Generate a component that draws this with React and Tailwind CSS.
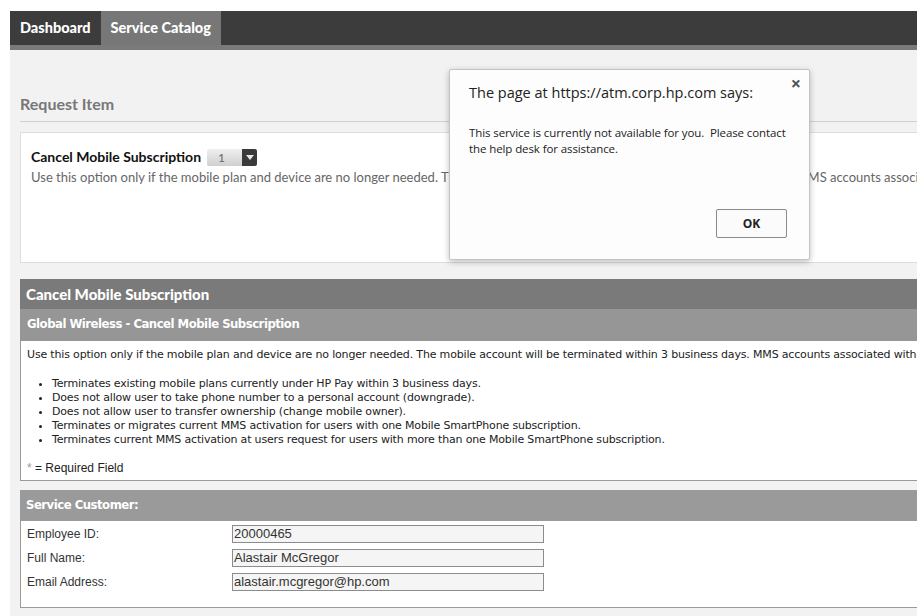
import React from "react";

const bullets = [
  "Terminates existing mobile plans currently under HP Pay within 3 business days.",
  "Does not allow user to take phone number to a personal account (downgrade).",
  "Does not allow user to transfer ownership (change mobile owner).",
  "Terminates or migrates current MMS activation for users with one Mobile SmartPhone subscription.",
  "Terminates current MMS activation at users request for users with more than one Mobile SmartPhone subscription.",
];

const customer = [
  { label: "Employee ID:", value: "20000465" },
  { label: "Full Name:", value: "Alastair McGregor" },
  { label: "Email Address:", value: "alastair.mcgregor@hp.com" },
];

const hp = { fontFamily: "Lato, 'Open Sans', sans-serif" };
const arial = { fontFamily: "'Liberation Sans', Arial, sans-serif" };
const tahoma = { fontFamily: "'DejaVu Sans', Tahoma, sans-serif", fontSize: "11px", letterSpacing: "-0.17px" };
const tahomaBold = { fontFamily: "'DejaVu Sans', Tahoma, sans-serif", fontSize: "11.7px", letterSpacing: "-0.5px" };

const QtySelect = () => (
  <div className="inline-flex h-[17px] w-[50px] rounded-[2px] overflow-hidden ml-[6px]">
    <div className="flex-1 bg-gradient-to-b from-[#f0f0f0] to-[#cfcfcf] text-[#666] text-[12px] leading-[17px] pl-[11px] font-normal">
      1
    </div>
    <div className="w-[15px] bg-[#3a3a3a] flex items-center justify-center">
      <svg width="8" height="5" viewBox="0 0 8 5">
        <path d="M0 0 L8 0 L4 5 Z" fill="#e8e8e8" />
      </svg>
    </div>
  </div>
);

const Dialog = () => (
  <div
    className="absolute left-[449px] top-[69px] w-[361px] h-[191px] bg-[#fdfdfd] border border-[#c4c4c4] rounded-[2px] shadow-[0_2px_6px_rgba(0,0,0,0.25)]"
    style={{ fontFamily: "'Open Sans', 'Noto Sans', sans-serif" }}
  >
    <div className="absolute right-[8px] top-[3px] text-[#555] text-[18px] font-bold leading-[20px]">×</div>
    <div className="pl-[19px] pt-[12px] text-[14.5px] leading-[22px] text-[#222]">
      The page at https://atm.corp.hp.com says:
    </div>
    <div className="pl-[19px] pt-[21px] pr-[10px] text-[11.5px] leading-[16px] text-[#222] tracking-[-0.1px] whitespace-nowrap">
      This service is currently not available for you.&nbsp; Please contact
      <br />
      the help desk for assistance.
    </div>
    <div className="absolute left-[266px] top-[139px] w-[71px] h-[29px] border border-[#8a8a8a] rounded-[2px] bg-[#fbfbfb] flex items-center justify-center text-[12px] font-bold text-[#222]">
      OK
    </div>
  </div>
);

export default function App() {
  return (
    <div className="relative w-[917px] h-[616px] overflow-hidden bg-white pl-[10px] pt-[11px]">
      <div className="w-[1100px] h-full bg-[#f2f2f2]">
        {/* nav */}
        <div className="flex h-[34px] bg-[#3c3c3c] text-white font-black text-[14.5px]" style={hp}>
          <div className="px-[10px] flex items-center">Dashboard</div>
          <div className="px-[10px] flex items-center bg-[#777777]">Service Catalog</div>
        </div>
        <div className="h-[5px] bg-[#7a7a7a]" />

        <div className="pl-[10px]">
          <div className="mt-[43px] pb-[6px] border-b border-[#cfcfcf] text-[16px] leading-[22px] font-bold text-[#777]" style={hp}>
            Request Item
          </div>

          {/* item card */}
          <div className="mt-[10px] h-[131px] bg-white border border-[#dddddd] pl-[10px] pt-[14px] overflow-hidden" style={hp}>
            <div className="text-[14px] leading-[20px] font-bold text-[#111] flex items-center">
              <span>Cancel Mobile Subscription</span>
              <QtySelect />
            </div>
            <div className="text-[13px] leading-[16px] text-[#666] whitespace-nowrap mt-[2px]">
              Use this option only if the mobile plan and device are no longer needed. The mobile account will be terminated within 3 business days. MMS accounts associated with the plan will be removed.
            </div>
          </div>

          {/* detail section */}
          <div className="mt-[16px]">
            <div className="h-[30px] bg-[#7a7a7a] text-white font-black text-[15px] flex items-center pl-[6px]" style={hp}>
              Cancel Mobile Subscription
            </div>
            <div className="h-[32px] bg-[#969696] text-white font-bold flex items-center pl-[7px]" style={tahomaBold}>
              Global Wireless - Cancel Mobile Subscription
            </div>
            <div className="bg-white border-l border-b border-[#9a9a9a] pl-[6px] pb-[5px] text-[12px] leading-[14px] text-[#222] overflow-hidden" style={arial}>
              <div className="pt-[7px] whitespace-nowrap" style={tahoma}>
                Use this option only if the mobile plan and device are no longer needed. The mobile account will be terminated within 3 business days. MMS accounts associated with the plan will be removed.
              </div>
              <ul className="mt-[15px] list-disc pl-[25px]" style={tahoma}>
                {bullets.map((b, i) => (
                  <li key={i} className="leading-[14px]">{b}</li>
                ))}
              </ul>
              <div className="mt-[14px] leading-[14px]">
                <span className="text-[#999]">*</span> = Required Field
              </div>
            </div>

            <div className="mt-[9px] h-[31px] bg-[#9a9a9a] text-white font-bold flex items-center pl-[6px]" style={tahomaBold}>
              Service Customer:
            </div>
            <div className="bg-white border-l border-b border-[#9a9a9a] pt-[1px] pb-[13px]" style={arial}>
              {customer.map((c) => (
                <div key={c.label} className="flex items-center h-[24px]">
                  <div className="w-[211px] pl-[6px] text-[12px] text-[#333]">{c.label}</div>
                  <div className="w-[312px] h-[18px] bg-[#f5f5f5] border border-[#8c8c8c] text-[13px] leading-[16px] text-[#333] pl-[1px]">
                    {c.value}
                  </div>
                </div>
              ))}
            </div>
          </div>
        </div>
      </div>

      <Dialog />
    </div>
  );
}
